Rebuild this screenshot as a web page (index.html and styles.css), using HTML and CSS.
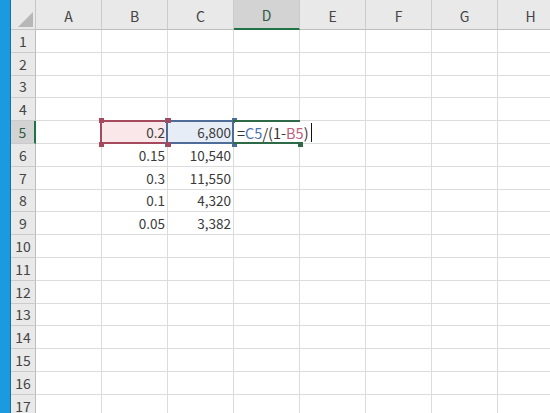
FILE: index.html
```html
<!DOCTYPE html>
<html>
<head>
<meta charset="utf-8">
<link rel="stylesheet" href="styles.css">
</head>
<body>
<div class="app">
  <div class="edge"></div>
  <div class="sheet">
    <div class="corner"><span class="tri"></span></div>
    <div class="ch">A</div><div class="ch">B</div><div class="ch">C</div><div class="ch sel-h">D</div><div class="ch">E</div><div class="ch">F</div><div class="ch">G</div><div class="ch">H</div>

    <div class="rh">1</div><div class="c"></div><div class="c"></div><div class="c"></div><div class="c"></div><div class="c"></div><div class="c"></div><div class="c"></div><div class="c"></div>
    <div class="rh">2</div><div class="c"></div><div class="c"></div><div class="c"></div><div class="c"></div><div class="c"></div><div class="c"></div><div class="c"></div><div class="c"></div>
    <div class="rh">3</div><div class="c"></div><div class="c"></div><div class="c"></div><div class="c"></div><div class="c"></div><div class="c"></div><div class="c"></div><div class="c"></div>
    <div class="rh">4</div><div class="c"></div><div class="c"></div><div class="c"></div><div class="c"></div><div class="c"></div><div class="c"></div><div class="c"></div><div class="c"></div>
    <div class="rh sel-r">5</div><div class="c"></div>
      <div class="c num ref ref-b">0.2<i class="h tl"></i><i class="h tr"></i><i class="h bl"></i><i class="h br"></i></div>
      <div class="c num ref ref-c">6,800<i class="h tl"></i><i class="h tr"></i><i class="h bl"></i><i class="h br"></i></div>
      <div class="c active"><span class="edit"><span class="op">=</span><span class="rc">C5</span><span class="op">/(1-</span><span class="rb">B5</span><span class="op">)</span><span class="caret"></span></span><i class="h fill"></i></div>
      <div class="c"></div><div class="c"></div><div class="c"></div><div class="c"></div>
    <div class="rh">6</div><div class="c"></div><div class="c num">0.15</div><div class="c num">10,540</div><div class="c"></div><div class="c"></div><div class="c"></div><div class="c"></div><div class="c"></div>
    <div class="rh">7</div><div class="c"></div><div class="c num">0.3</div><div class="c num">11,550</div><div class="c"></div><div class="c"></div><div class="c"></div><div class="c"></div><div class="c"></div>
    <div class="rh">8</div><div class="c"></div><div class="c num">0.1</div><div class="c num">4,320</div><div class="c"></div><div class="c"></div><div class="c"></div><div class="c"></div><div class="c"></div>
    <div class="rh">9</div><div class="c"></div><div class="c num">0.05</div><div class="c num">3,382</div><div class="c"></div><div class="c"></div><div class="c"></div><div class="c"></div><div class="c"></div>
    <div class="rh">10</div><div class="c"></div><div class="c"></div><div class="c"></div><div class="c"></div><div class="c"></div><div class="c"></div><div class="c"></div><div class="c"></div>
    <div class="rh">11</div><div class="c"></div><div class="c"></div><div class="c"></div><div class="c"></div><div class="c"></div><div class="c"></div><div class="c"></div><div class="c"></div>
    <div class="rh">12</div><div class="c"></div><div class="c"></div><div class="c"></div><div class="c"></div><div class="c"></div><div class="c"></div><div class="c"></div><div class="c"></div>
    <div class="rh">13</div><div class="c"></div><div class="c"></div><div class="c"></div><div class="c"></div><div class="c"></div><div class="c"></div><div class="c"></div><div class="c"></div>
    <div class="rh">14</div><div class="c"></div><div class="c"></div><div class="c"></div><div class="c"></div><div class="c"></div><div class="c"></div><div class="c"></div><div class="c"></div>
    <div class="rh">15</div><div class="c"></div><div class="c"></div><div class="c"></div><div class="c"></div><div class="c"></div><div class="c"></div><div class="c"></div><div class="c"></div>
    <div class="rh">16</div><div class="c"></div><div class="c"></div><div class="c"></div><div class="c"></div><div class="c"></div><div class="c"></div><div class="c"></div><div class="c"></div>
    <div class="rh">17</div><div class="c"></div><div class="c"></div><div class="c"></div><div class="c"></div><div class="c"></div><div class="c"></div><div class="c"></div><div class="c"></div>
  </div>
</div>
</body>
</html>
```

FILE: styles.css
```css
html, body {
  margin: 0;
  padding: 0;
  background: #ffffff;
  overflow: hidden;
}
.app {
  display: flex;
  width: 550px;
  height: 413px;
  overflow: hidden;
  font-family: "Noto Sans CJK JP", "Noto Sans", sans-serif;
  font-size: 13.5px;
  color: #333;
}
.edge {
  flex: 0 0 10px;
  background: #1a9be0;
  border-right: 1px solid #1570a8;
}
.sheet {
  display: grid;
  grid-template-columns: 25px repeat(8, 66px);
  grid-template-rows: 30px repeat(17, 22.8px);
  flex: 0 0 auto;
}
.corner {
  position: relative;
  background: #e9e9e9;
  border-right: 1px solid #c6c6c6;
  border-bottom: 1px solid #c6c6c6;
  box-sizing: border-box;
}
.tri {
  position: absolute;
  right: 2px;
  bottom: 2px;
  width: 0;
  height: 0;
  border-left: 15px solid transparent;
  border-bottom: 15px solid #b7b7b7;
}
.ch {
  background: #e9e9e9;
  border-right: 1px solid #cbcbcb;
  border-bottom: 1px solid #bdbdbd;
  box-sizing: border-box;
  display: flex;
  align-items: center;
  justify-content: center;
  padding-top: 2px;
  color: #444;
  font-size: 14px;
}
.ch.sel-h {
  background: #d3d3d3;
  border-bottom: 2px solid #217346;
  color: #2f5c3f;
}
.rh {
  background: #e9e9e9;
  border-right: 1px solid #bdbdbd;
  border-bottom: 1px solid #cbcbcb;
  box-sizing: border-box;
  display: flex;
  align-items: center;
  justify-content: center;
  color: #444;
  font-size: 14px;
}
.rh.sel-r {
  background: #d3d3d3;
  border-right: 2px solid #217346;
  color: #2f5c3f;
}
.c {
  position: relative;
  border-right: 1px solid #dcdcdc;
  border-bottom: 1px solid #dcdcdc;
  box-sizing: border-box;
  display: flex;
  align-items: center;
  white-space: nowrap;
  color: #3a3a3a;
}
.num {
  justify-content: flex-end;
  padding-right: 2px;
}
.ref::after {
  content: "";
  position: absolute;
  top: -1px;
  left: -2px;
  right: -1px;
  bottom: -1px;
  border: 2px solid var(--rc);
  pointer-events: none;
}
.ref-b {
  --rc: #a44a5c;
  background: #f9e7e9;
}
.ref-c {
  --rc: #4d6c9a;
  background: #e7edf7;
  z-index: 2;
}
.h {
  position: absolute;
  width: 5px;
  height: 5px;
  background: var(--rc);
  z-index: 3;
}
.h.tl { top: -3px; left: -3px; }
.h.tr { top: -3px; right: -4px; }
.h.bl { bottom: -4px; left: -3px; }
.h.br { bottom: -4px; right: -4px; }
.active {
  z-index: 4;
  overflow: visible;
}
.active::before {
  content: "";
  position: absolute;
  top: -1px;
  left: -1px;
  right: -1px;
  bottom: -1px;
  border-top: 2px solid #2e6a48;
  border-bottom: 2px solid #2e6a48;
}
.edit {
  position: relative;
  display: flex;
  align-items: center;
  background: #fff;
  padding-left: 2px;
  padding-right: 2px;
  height: 20px;
  margin-left: 1px;
  font-size: 14.5px;
  color: #333;
}
.op { color: #333; }
.rc { color: #4c74b0; }
.rb { color: #c0607a; }
.caret {
  display: inline-block;
  width: 1px;
  height: 19px;
  margin-left: 2px;
  background: #111;
}
.h.fill {
  --rc: #2e6a48;
  right: -4px;
  bottom: -4px;
}
```
